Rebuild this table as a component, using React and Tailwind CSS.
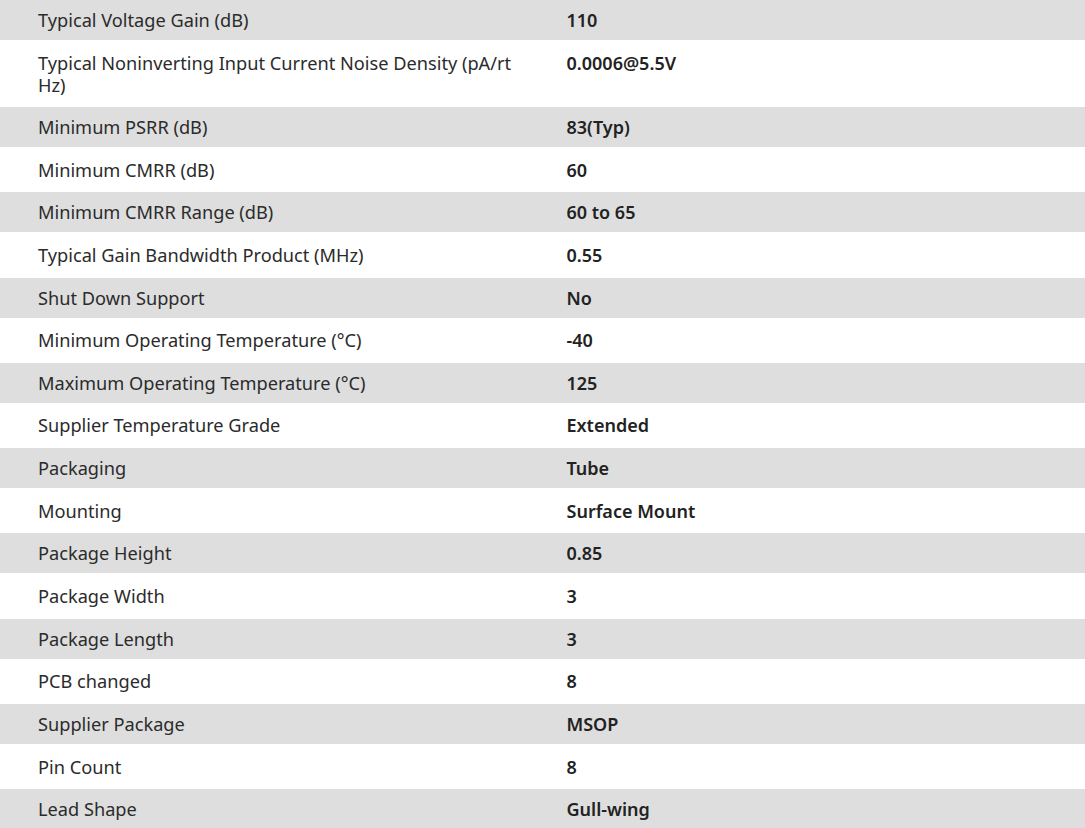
const rows = [
  ['Typical Voltage Gain (dB)', '110'],
  ['Typical Noninverting Input Current Noise Density (pA/rt Hz)', '0.0006@5.5V'],
  ['Minimum PSRR (dB)', '83(Typ)'],
  ['Minimum CMRR (dB)', '60'],
  ['Minimum CMRR Range (dB)', '60 to 65'],
  ['Typical Gain Bandwidth Product (MHz)', '0.55'],
  ['Shut Down Support', 'No'],
  ['Minimum Operating Temperature (°C)', '-40'],
  ['Maximum Operating Temperature (°C)', '125'],
  ['Supplier Temperature Grade', 'Extended'],
  ['Packaging', 'Tube'],
  ['Mounting', 'Surface Mount'],
  ['Package Height', '0.85'],
  ['Package Width', '3'],
  ['Package Length', '3'],
  ['PCB changed', '8'],
  ['Supplier Package', 'MSOP'],
  ['Pin Count', '8'],
  ['Lead Shape', 'Gull-wing'],
];

export default function App() {
  return (
    <div className="w-[1085px] h-[828px] overflow-hidden bg-white leading-[22px] text-[#2b2b2b] font-['Noto_Sans',sans-serif]">
      {rows.map(([label, value], i) => (
        <div
          key={label}
          className={
            'grid grid-cols-2 items-start ' +
            (i % 2 === 0 ? 'bg-[#dedede] py-[9px]' : i === 1 ? 'bg-white py-[11.5px]' : 'bg-white py-[11.65px]')
          }
        >
          <div className="pl-[38px] pr-[18px] text-[18.2px]">{label}</div>
          <div className="pl-6 text-[18px] font-semibold text-[#222]">{value}</div>
        </div>
      ))}
    </div>
  );
}
